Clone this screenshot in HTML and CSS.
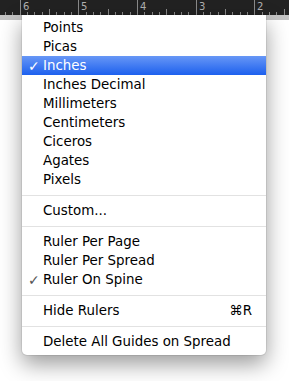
FILE: index.html
```html
<!DOCTYPE html>
<html lang="en">
<head>
<title>Ruler Units</title>
<meta name="viewport" content="width=device-width, initial-scale=1.0">
<link rel="stylesheet" href="styles.css">
</head>
<body>
<div class="ruler">
    <svg width="289" height="15" viewBox="0 0 289 15">
        <rect x="0" y="0" width="289" height="15" fill="#222"/>
        <g stroke="#8a8a8a" stroke-width="1" id="ticks"></g>
        <g fill="#b0b0b0" font-family="DejaVu Sans, sans-serif" font-size="10" id="nums"></g>
    </svg>
</div>
<div class="strip"></div>

<div class="menu">
    <div class="item"><span class="mark"></span>Points</div>
    <div class="item"><span class="mark"></span>Picas</div>
    <div class="item activo"><span class="mark">✓</span>Inches</div>
    <div class="item"><span class="mark"></span>Inches Decimal</div>
    <div class="item"><span class="mark"></span>Millimeters</div>
    <div class="item"><span class="mark"></span>Centimeters</div>
    <div class="item"><span class="mark"></span>Ciceros</div>
    <div class="item"><span class="mark"></span>Agates</div>
    <div class="item"><span class="mark"></span>Pixels</div>
    <div class="sep"></div>
    <div class="item"><span class="mark"></span>Custom...</div>
    <div class="sep"></div>
    <div class="item"><span class="mark"></span>Ruler Per Page</div>
    <div class="item"><span class="mark"></span>Ruler Per Spread</div>
    <div class="item"><span class="mark">✓</span>Ruler On Spine</div>
    <div class="sep"></div>
    <div class="item"><span class="mark"></span>Hide Rulers<span class="atajo">⌘R</span></div>
    <div class="sep"></div>
    <div class="item"><span class="mark"></span>Delete All Guides on Spread</div>
</div>

<script>
    let ticks = document.getElementById("ticks");
    let nums = document.getElementById("nums");
    let paso = 58.7 / 8;
    let inicio = 19.5 - paso * 2;
    let ns = "http://www.w3.org/2000/svg";

    for (let i = 0; i < 42; i++) {
        let x = Math.round(inicio + i * paso) + 0.5;
        if (x > 289) break;
        let n = (i - 2) % 8;
        let y1 = 12;
        if (n === 0) y1 = 0;
        else if (n === 4) y1 = 9;
        let l = document.createElementNS(ns, "line");
        l.setAttribute("x1", x);
        l.setAttribute("x2", x);
        l.setAttribute("y1", y1);
        l.setAttribute("y2", 15);
        ticks.appendChild(l);
        if (n === 0) {
            let t = document.createElementNS(ns, "text");
            t.setAttribute("x", x + 2.5);
            t.setAttribute("y", 10);
            t.textContent = 6 - (i - 2) / 8;
            nums.appendChild(t);
        }
    }
</script>
</body>
</html>
```

FILE: styles.css
```css
body {
    margin: 0;
    background: #fff;
    position: relative;
    height: 381px;
    overflow: hidden;
    font-family: "DejaVu Sans", sans-serif;
}

.ruler svg {
    display: block;
}

.strip {
    height: 5px;
    background: #c4c4c4;
}

.menu {
    position: absolute;
    left: 22px;
    top: 15px;
    width: 244px;
    padding: 3px 0 4px;
    background: #fff;
    border-radius: 0 0 5px 5px;
    box-shadow: 0 9px 22px rgba(0, 0, 0, 0.4), 0 0 0 1px rgba(0, 0, 0, 0.07);
}

.item {
    display: flex;
    align-items: center;
    height: 19px;
    padding-right: 14px;
    font-size: 13.4px;
    color: #000;
    white-space: nowrap;
}

.mark {
    width: 21px;
    padding-left: 6px;
    box-sizing: border-box;
    color: #555;
    font-size: 14px;
}

.activo {
    background: linear-gradient(to bottom, #6797f6, #1d60ee);
    color: #fff;
}

.activo .mark {
    color: #fff;
}

.atajo {
    margin-left: auto;
}

.sep {
    height: 1px;
    background: #e2e2e2;
    margin: 6px 0 5px;
}
```
